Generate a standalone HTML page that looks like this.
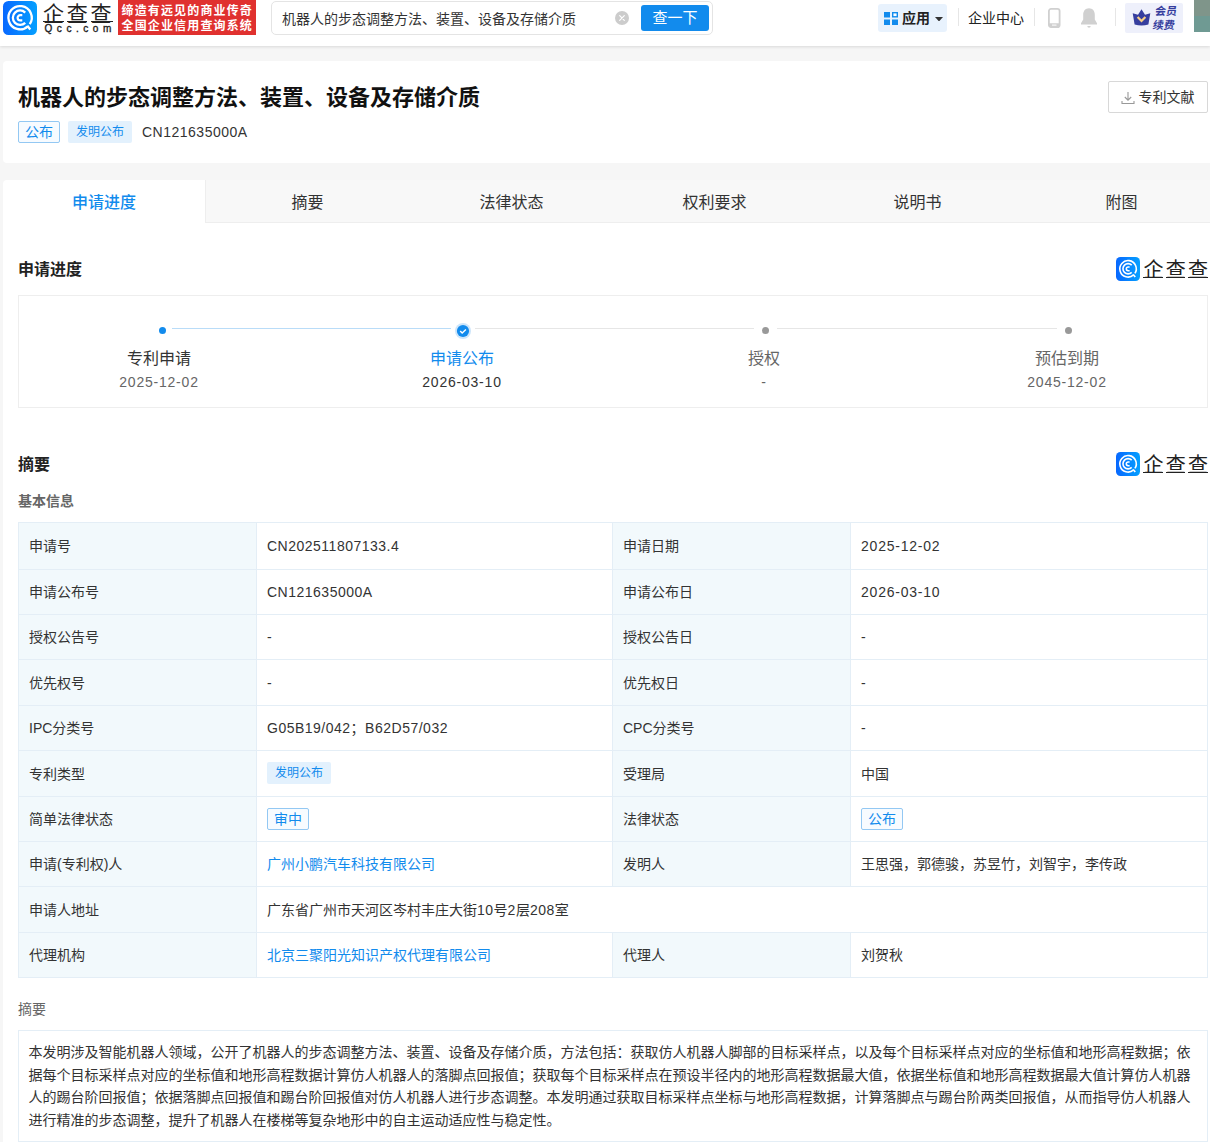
<!DOCTYPE html>
<html lang="zh-CN">
<head>
<meta charset="utf-8">
<title>机器人的步态调整方法、装置、设备及存储介质</title>
<style>
*{box-sizing:border-box;margin:0;padding:0}
html,body{width:1210px;height:1142px;overflow:hidden}
body{background:#f6f6f6;font-family:"Liberation Sans","Noto Sans CJK SC",sans-serif;color:#333;font-size:14px;position:relative}
.abs{position:absolute}
/* header */
#hdr{position:absolute;left:0;top:0;width:1210px;height:46px;background:#fff;box-shadow:0 1px 3px rgba(0,0,0,.12)}
#logoicon{position:absolute;left:3px;top:.7px;width:34px;height:34px;border-radius:5.5px;background:linear-gradient(90deg,#0868ff,#05a0ff);overflow:hidden}
#brand{position:absolute;left:43px;top:-.3px;font-size:21px;line-height:28px;color:#222;letter-spacing:2.7px;white-space:nowrap;font-weight:400}
.bl{position:absolute;top:21.300px;height:1.200px;width:20.600px;background:#222}
#qcc{position:absolute;left:44.500px;top:23px;font-size:10px;line-height:12px;letter-spacing:4.550px;color:#222;white-space:nowrap;-webkit-text-stroke:.35px #222}
#slogan{position:absolute;left:118px;top:0;width:138px;height:35px;background:#e0312f;color:#fff;font-size:12px;font-weight:bold;line-height:15.4px;padding:3.8px 0 0 3.5px;white-space:nowrap;letter-spacing:1.15px}
#search{position:absolute;left:271px;top:1px;width:442px;height:34px;border:1px solid #e4e4e4;border-radius:5px;background:#fff}
#search .q{position:absolute;left:10px;top:8px;font-size:14px;line-height:18px;color:#333;white-space:nowrap}
#clr{position:absolute;left:615px;top:11px;width:14px;height:14px;border-radius:7px;background:#ccc}
#btn{position:absolute;left:641px;top:5px;width:68px;height:26px;border-radius:3px;background:#128bed;color:#fff;font-size:15px;line-height:26px;text-align:center}
#app{position:absolute;left:878px;top:4px;width:69px;height:28px;border-radius:3px;background:#e8f2fd}
#app .t{position:absolute;left:24px;top:5px;font-size:14px;line-height:18px;font-weight:bold;color:#222}
.vsep{position:absolute;top:8px;width:1px;height:18px;background:#e6e6e6}
#ecenter{position:absolute;left:968px;top:9px;font-size:14px;line-height:18px;color:#222;white-space:nowrap}
#vip{position:absolute;left:1125px;top:3px;width:58px;height:30px;border-radius:2px;background:#eef0fb}
#vip .t{position:absolute;left:28.500px;top:2px;font-size:11px;line-height:13.500px;font-weight:bold;color:#363e9e;transform:skewX(-9deg)}
#avatar{position:absolute;left:1194px;top:0;width:16px;height:32px;background:linear-gradient(#7f958a 0,#7f958a 50%,#6f9a93 50%,#6f9a93 100%)}
/* title card */
#card1{position:absolute;left:3px;top:61px;width:1207px;height:102px;background:#fff;border-radius:4px 0 0 4px}
#title{position:absolute;left:15px;top:21px;font-size:22px;line-height:32px;font-weight:bold;color:#111;white-space:nowrap}
.tag{position:absolute;height:22px;font-size:12px;line-height:20px;border-radius:2px;text-align:center;white-space:nowrap}
#dl{position:absolute;left:1105px;top:20px;width:100px;height:32px;border:1px solid #d8d8d8;border-radius:2px;background:#fff}
#dl .t{position:absolute;left:29.500px;top:6px;font-size:14px;line-height:18px;color:#333;white-space:nowrap}
/* tabs */
#tabs{position:absolute;left:3px;top:180px;width:1207px;height:43px;background:#f8f8f8;border-bottom:1px solid #eee;border-radius:4px 0 0 0}
.tab{position:absolute;top:0;height:43px;font-size:16px;line-height:45px;text-align:center;color:#333;width:203px}
.tab.on{background:#fff;color:#128bed;height:43px;font-weight:500;border-radius:4px 0 0 0;border-right:1px solid #eee}
#main{position:absolute;left:3px;top:223px;width:1207px;height:919px;background:#fff}
.h2{position:absolute;left:15px;font-size:16px;line-height:22px;font-weight:bold;color:#222}
.h3{position:absolute;left:15px;font-size:14px;line-height:20px;color:#666;font-weight:bold}
.la{letter-spacing:.5px}
.ld{letter-spacing:.78px}

.slogo{position:absolute;width:94px;height:24px}
.slogo .ic{position:absolute;left:0;top:0;width:24px;height:24px;border-radius:4.5px;background:linear-gradient(90deg,#0868ff,#05a0ff);overflow:hidden}
.slogo .tx{position:absolute;left:27.500px;top:-1.500px;font-size:20px;line-height:28px;color:#222;white-space:nowrap;letter-spacing:2.200px;font-weight:400}
.slogo i{position:absolute;top:19.800px;width:19.800px;height:1.300px;background:#222}
.tl{position:absolute;border:1px solid #eee;background:#fff}
.ln{position:absolute;height:1px}
.dot{position:absolute;width:7px;height:7px;border-radius:50%}
.chk{position:absolute;width:16px;height:16px}
.sn{position:absolute;width:150px;text-align:center;font-size:16px;line-height:22px;white-space:nowrap}
.sd{position:absolute;width:150px;text-align:center;font-size:14px;line-height:18px;white-space:nowrap;letter-spacing:.78px}
.tb{position:absolute}
.tr{position:absolute;left:0;width:100%}
.td{position:absolute;top:0;height:100%;border:1px solid #e4eef6;font-size:14px;line-height:20px;padding:0 10px;display:flex;align-items:center;white-space:nowrap;color:#333}
.td.k{background:#f2f9fc}
.td.v{background:#fff}
.tg{display:inline-block;height:22px;border-radius:2px;font-size:12px;padding:0 8px;line-height:22px;position:relative;top:-1px}
.tg.f{background:#e3f1fd;color:#128bed}
.tg.o{border:1px solid #93c8f3;background:#f7fbff;color:#128bed;line-height:20px;padding:0 6px;font-size:14px;height:22px;width:42px;text-align:center;top:-.5px}
.lk{color:#128bed}
.ab{position:absolute;border:1px solid #e4eef6;font-size:14px;line-height:22.6px;padding:10px 9.500px;white-space:nowrap;color:#333}
</style>
</head>
<body>
<svg width="0" height="0" style="position:absolute"><defs><g id="qmark" fill="none" stroke="#fff" stroke-width="2.300"><path d="M26.760 23.210A11.650 11.650 0 1 0 24.900 25.360"/><path d="M22.230 11.570A7.250 7.250 0 1 0 22.230 21.830"/><path d="M19.300 14.200H17.200A2.600 2.600 0 0 0 17.200 19.400H19.300" stroke-width="2.200"/><path d="M24.300 24.700L27.300 28.500"/></g></defs></svg>
<div id="hdr">
  <div id="logoicon"><svg width="34" height="34" viewBox="0 0 34 34"><use href="#qmark"/></svg></div>
  <div id="brand">企查查</div>
  <div class="bl" style="left:43.300px"></div><div class="bl" style="left:66.900px"></div><div class="bl" style="left:90.600px;width:22px"></div>
  <div id="qcc">Qcc.com</div>
  <div id="slogan">缔造有远见的商业传奇<br>全国企业信用查询系统</div>
  <div id="search"><div class="q">机器人的步态调整方法、装置、设备及存储介质</div></div>
  <div id="clr"><svg width="14" height="14" viewBox="0 0 14 14"><path d="M4.7 4.7l4.6 4.6M9.3 4.7l-4.6 4.6" stroke="#fff" stroke-width="1.2" stroke-linecap="round"/></svg></div>
  <div id="btn">查一下</div>
  <div id="app">
    <svg class="abs" style="left:5.700px;top:7.500px" width="14" height="13" viewBox="0 0 14 13"><rect x="0" y="0" width="6" height="5.500" fill="#128bed"/><rect x="8.700" y="0.700" width="4.600" height="4.100" fill="#fff" stroke="#128bed" stroke-width="1.400"/><rect x="0" y="7.500" width="6" height="5.500" fill="#128bed"/><rect x="8" y="7.500" width="6" height="5.500" fill="#128bed"/></svg>
    <div class="t">应用</div>
    <svg class="abs" style="left:57px;top:12.500px" width="8" height="4.500" viewBox="0 0 9 5"><path d="M0 0h9L4.5 5z" fill="#333"/></svg>
  </div>
  <div class="vsep" style="left:958px"></div>
  <div id="ecenter">企业中心</div>
  <div class="vsep" style="left:1034px"></div>
  <svg class="abs" style="left:1048px;top:8px" width="12.500" height="20" viewBox="0 0 12.500 20"><rect x="0.900" y="0.900" width="10.700" height="18.200" rx="2.200" fill="#fff" stroke="#d0d0d0" stroke-width="1.800"/><path d="M1 15.200h10.500v2.500a1.500 1.500 0 0 1-1.500 1.500H2.500A1.500 1.500 0 0 1 1 17.700z" fill="#d0d0d0"/><rect x="4" y="16.600" width="4.500" height="1" fill="#fff"/></svg>
  <svg class="abs" style="left:1079.700px;top:7px" width="18" height="22" viewBox="0 0 18 21" preserveAspectRatio="none"><path d="M9 1.2c-3.6 0-5.8 2.7-5.8 6.2v4.6L1 15.6v1h16v-1l-2.200-3.600V7.400C14.800 3.900 12.600 1.200 9 1.200z" fill="#d0d0d0"/><path d="M7.300 18.200h3.400a1.700 1.700 0 0 1-3.400 0z" fill="#d0d0d0"/></svg>
  <div class="vsep" style="left:1115px"></div>
  <div id="vip">
    <svg class="abs" style="left:7px;top:6px" width="19" height="17" viewBox="0 0 19 17"><path d="M9.500 0.300 13 5.800 18.300 4.300 16.400 15.500Q9.500 17.600 2.600 15.500L0.700 4.300 6 5.800z" fill="#363e9e"/><path d="M5.600 8l3.900 4L13.400 8" fill="none" stroke="#f8cf86" stroke-width="2.200"/></svg>
    <div class="t">会员<br>续费</div>
  </div>
  <div id="avatar"></div>
</div>

<div id="card1">
  <div id="title">机器人的步态调整方法、装置、设备及存储介质</div>
  <div class="tag" style="left:15px;top:60px;width:42px;border:1px solid #93c8f3;color:#128bed;background:#f7fbff;font-size:14px">公布</div>
  <div class="tag" style="left:65px;top:60px;width:64px;background:#e3f1fd;color:#128bed;line-height:22px">发明公布</div>
  <div class="abs la" style="left:139px;top:62px;font-size:14px;line-height:18px;color:#333">CN121635000A</div>
  <div id="dl">
    <svg class="abs" style="left:12px;top:9px" width="14" height="14" viewBox="0 0 14 14"><path d="M7 1v8M3.800 6l3.200 3.200L10.200 6M1 10v2.500h12V10" fill="none" stroke="#999" stroke-width="1.100"/></svg>
    <div class="t">专利文献</div>
  </div>
</div>

<div id="tabs">
  <div class="tab on" style="left:0">申请进度</div>
  <div class="tab" style="left:203px">摘要</div>
  <div class="tab" style="left:407px">法律状态</div>
  <div class="tab" style="left:610px">权利要求</div>
  <div class="tab" style="left:813px">说明书</div>
  <div class="tab" style="left:1017px">附图</div>
</div>

<div id="main">
<div class="h2" style="left:15px;top:36px">申请进度</div>
<div class="slogo" style="left:1113px;top:34px"><div class="ic"><svg width="24" height="24" viewBox="0 0 34 34"><use href="#qmark"/></svg></div><div class="tx">企查查</div><i style="left:27.400px"></i><i style="left:49.700px"></i><i style="left:72px"></i></div>
<div class="tl" style="left:15px;top:72px;width:1190px;height:113px">
<div class="ln" style="left:153px;top:32px;width:279px;background:#b9dcf8"></div>
<div class="ln" style="left:456px;top:32px;width:279px;background:#e6e6e6"></div>
<div class="ln" style="left:758px;top:32px;width:280px;background:#e6e6e6"></div>
<div class="dot" style="left:140px;top:31px;background:#128bed"></div>
<div class="chk" style="left:436px;top:27px"><svg width="16" height="16" viewBox="0 0 16 16"><circle cx="8" cy="8" r="8" fill="#cde5fa"/><circle cx="8" cy="8" r="6.100" fill="#128bed"/><path d="M5.200 8l2 2.100 3.700-3.600" fill="none" stroke="#fff" stroke-width="1.400"/></svg></div>
<div class="dot" style="left:743px;top:31px;background:#999"></div>
<div class="dot" style="left:1046px;top:31px;background:#999"></div>
<div class="sn" style="left:65px;top:52px;color:#333">专利申请</div>
<div class="sd" style="left:65px;top:76.5px;color:#666">2025-12-02</div>
<div class="sn" style="left:368px;top:52px;color:#128bed">申请公布</div>
<div class="sd" style="left:368px;top:76.5px;color:#333">2026-03-10</div>
<div class="sn" style="left:670px;top:52px;color:#666">授权</div>
<div class="sd" style="left:670px;top:76.5px;color:#666">-</div>
<div class="sn" style="left:973px;top:52px;color:#666">预估到期</div>
<div class="sd" style="left:973px;top:76.5px;color:#666">2045-12-02</div>
</div>
<div class="h2" style="left:15px;top:231px">摘要</div>
<div class="slogo" style="left:1113px;top:229px"><div class="ic"><svg width="24" height="24" viewBox="0 0 34 34"><use href="#qmark"/></svg></div><div class="tx">企查查</div><i style="left:27.400px"></i><i style="left:49.700px"></i><i style="left:72px"></i></div>
<div class="h3" style="left:15px;top:268px">基本信息</div>
<div class="tb" style="left:15px;top:299px;width:1190px;height:456px">
<div class="tr" style="top:0px;height:48px">
<div class="td k" style="left:0;width:239px">申请号</div>
<div class="td v" style="left:238px;width:357px"><span class="la">CN202511807133.4</span></div>
<div class="td k" style="left:594px;width:239px">申请日期</div>
<div class="td v" style="left:832px;width:358px"><span class="ld">2025-12-02</span></div>
</div>
<div class="tr" style="top:47px;height:46px">
<div class="td k" style="left:0;width:239px">申请公布号</div>
<div class="td v" style="left:238px;width:357px"><span class="la">CN121635000A</span></div>
<div class="td k" style="left:594px;width:239px">申请公布日</div>
<div class="td v" style="left:832px;width:358px"><span class="ld">2026-03-10</span></div>
</div>
<div class="tr" style="top:92px;height:46px">
<div class="td k" style="left:0;width:239px">授权公告号</div>
<div class="td v" style="left:238px;width:357px">-</div>
<div class="td k" style="left:594px;width:239px">授权公告日</div>
<div class="td v" style="left:832px;width:358px">-</div>
</div>
<div class="tr" style="top:137px;height:47px">
<div class="td k" style="left:0;width:239px">优先权号</div>
<div class="td v" style="left:238px;width:357px">-</div>
<div class="td k" style="left:594px;width:239px">优先权日</div>
<div class="td v" style="left:832px;width:358px">-</div>
</div>
<div class="tr" style="top:183px;height:46px">
<div class="td k" style="left:0;width:239px">IPC分类号</div>
<div class="td v" style="left:238px;width:357px"><span class="la">G05B19/042；B62D57/032</span></div>
<div class="td k" style="left:594px;width:239px">CPC分类号</div>
<div class="td v" style="left:832px;width:358px">-</div>
</div>
<div class="tr" style="top:228px;height:47px">
<div class="td k" style="left:0;width:239px">专利类型</div>
<div class="td v" style="left:238px;width:357px"><span class="tg f">发明公布</span></div>
<div class="td k" style="left:594px;width:239px">受理局</div>
<div class="td v" style="left:832px;width:358px">中国</div>
</div>
<div class="tr" style="top:274px;height:46px">
<div class="td k" style="left:0;width:239px">简单法律状态</div>
<div class="td v" style="left:238px;width:357px"><span class="tg o">审中</span></div>
<div class="td k" style="left:594px;width:239px">法律状态</div>
<div class="td v" style="left:832px;width:358px"><span class="tg o">公布</span></div>
</div>
<div class="tr" style="top:319px;height:46px">
<div class="td k" style="left:0;width:239px">申请(专利权)人</div>
<div class="td v" style="left:238px;width:357px"><span class="lk">广州小鹏汽车科技有限公司</span></div>
<div class="td k" style="left:594px;width:239px">发明人</div>
<div class="td v" style="left:832px;width:358px">王思强，郭德骏，苏昱竹，刘智宇，李传政</div>
</div>
<div class="tr" style="top:364px;height:47px">
<div class="td k" style="left:0;width:239px">申请人地址</div>
<div class="td v" style="left:238px;width:952px">广东省广州市天河区岑村丰庄大街<span class="la">10</span>号<span class="la">2</span>层<span class="la">208</span>室</div>
</div>
<div class="tr" style="top:410px;height:46px">
<div class="td k" style="left:0;width:239px">代理机构</div>
<div class="td v" style="left:238px;width:357px"><span class="lk">北京三聚阳光知识产权代理有限公司</span></div>
<div class="td k" style="left:594px;width:239px">代理人</div>
<div class="td v" style="left:832px;width:358px">刘贺秋</div>
</div>
</div>
<div class="h3" style="left:15px;top:776px;font-weight:normal">摘要</div>
<div class="ab" style="left:15px;top:807px;width:1190px;height:112px">本发明涉及智能机器人领域，公开了机器人的步态调整方法、装置、设备及存储介质，方法包括：获取仿人机器人脚部的目标采样点，以及每个目标采样点对应的坐标值和地形高程数据；依<br>据每个目标采样点对应的坐标值和地形高程数据计算仿人机器人的落脚点回报值；获取每个目标采样点在预设半径内的地形高程数据最大值，依据坐标值和地形高程数据最大值计算仿人机器<br>人的踢台阶回报值；依据落脚点回报值和踢台阶回报值对仿人机器人进行步态调整。本发明通过获取目标采样点坐标与地形高程数据，计算落脚点与踢台阶两类回报值，从而指导仿人机器人<br>进行精准的步态调整，提升了机器人在楼梯等复杂地形中的自主运动适应性与稳定性。</div>
</div>
</body>
</html>
